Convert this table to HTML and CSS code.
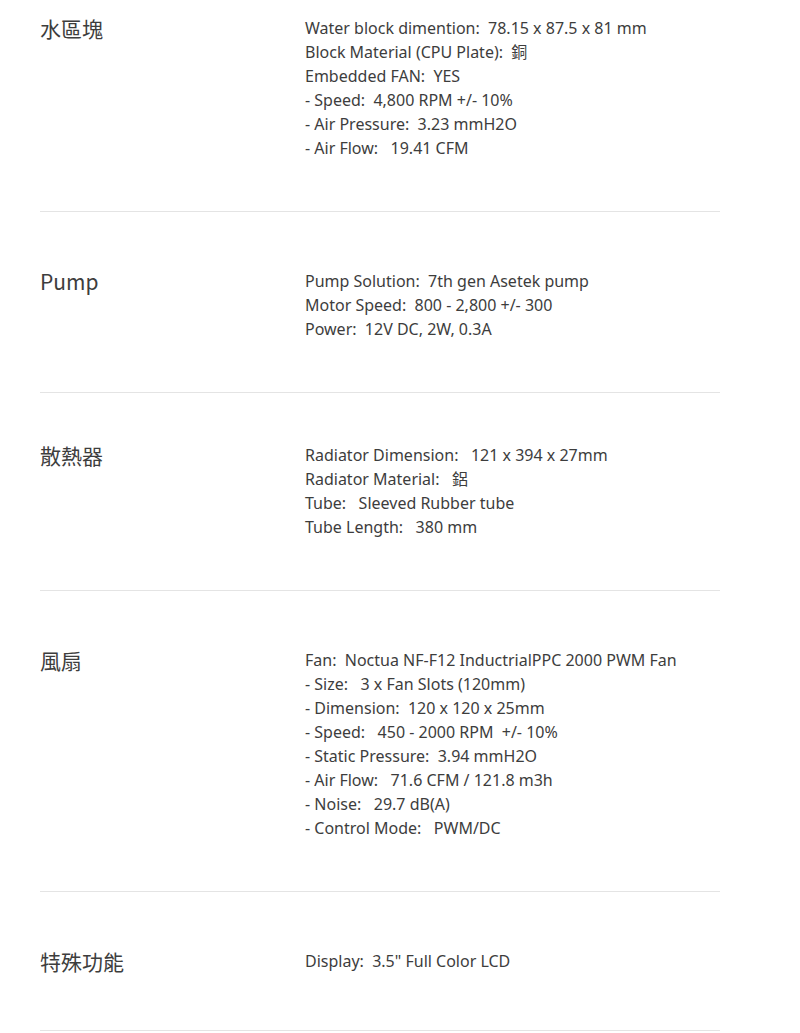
FILE: index.html
```html
<!DOCTYPE html>
<html lang="zh-Hant">
<head>
<meta charset="utf-8">
<title>Specs</title>
<link rel="stylesheet" href="styles.css">
</head>
<body>
<div class="specs">
  <div class="row row-first">
    <div class="label">水區塊</div>
    <div class="values">
      <div>Water block dimention:&nbsp; 78.15 x 87.5 x 81 mm</div>
      <div>Block Material (CPU Plate):&nbsp; 銅</div>
      <div>Embedded FAN:&nbsp; YES</div>
      <div>- Speed:&nbsp; 4,800 RPM +/- 10%</div>
      <div>- Air Pressure:&nbsp; 3.23 mmH2O</div>
      <div>- Air Flow:&nbsp;&nbsp; 19.41 CFM</div>
    </div>
  </div>
  <div class="row">
    <div class="label">Pump</div>
    <div class="values">
      <div>Pump Solution:&nbsp; 7th gen Asetek pump</div>
      <div>Motor Speed:&nbsp; 800 - 2,800 +/- 300</div>
      <div>Power:&nbsp; 12V DC, 2W, 0.3A</div>
    </div>
  </div>
  <div class="row row-tight">
    <div class="label">散熱器</div>
    <div class="values">
      <div>Radiator Dimension:&nbsp;&nbsp; 121 x 394 x 27mm</div>
      <div>Radiator Material:&nbsp;&nbsp; 鋁</div>
      <div>Tube:&nbsp;&nbsp; Sleeved Rubber tube</div>
      <div>Tube Length:&nbsp;&nbsp; 380 mm</div>
    </div>
  </div>
  <div class="row">
    <div class="label">風扇</div>
    <div class="values">
      <div>Fan:&nbsp; Noctua NF-F12 InductrialPPC 2000 PWM Fan</div>
      <div>- Size:&nbsp;&nbsp; 3 x Fan Slots (120mm)</div>
      <div>- Dimension:&nbsp; 120 x 120 x 25mm</div>
      <div>- Speed:&nbsp;&nbsp; 450 - 2000 RPM&nbsp; +/- 10%</div>
      <div>- Static Pressure:&nbsp; 3.94 mmH2O</div>
      <div>- Air Flow:&nbsp;&nbsp; 71.6 CFM / 121.8 m3h</div>
      <div>- Noise:&nbsp;&nbsp; 29.7 dB(A)</div>
      <div>- Control Mode:&nbsp;&nbsp; PWM/DC</div>
    </div>
  </div>
  <div class="row row-last">
    <div class="label">特殊功能</div>
    <div class="values">
      <div>Display:&nbsp; 3.5" Full Color LCD</div>
    </div>
  </div>
</div>
</body>
</html>
```

FILE: styles.css
```css
html, body {
  margin: 0;
  padding: 0;
  background: #ffffff;
}

body {
  font-family: "Noto Sans", "Noto Sans CJK TC", sans-serif;
  color: #3d3d3d;
}

.specs {
  width: 680px;
  margin-left: 40px;
  padding-top: 16px;
}

.row {
  display: grid;
  grid-template-columns: 265px 1fr;
  align-items: start;
  padding: 57px 0 51px;
  border-bottom: 1px solid #e4e4e4;
}

.row-first {
  padding-top: 0;
}

.row-tight {
  padding-top: 50px;
}

.row-last {
  padding-bottom: 57px;
}

.label {
  font-family: "Noto Sans CJK TC", "Noto Sans", sans-serif;
  font-size: 21px;
  line-height: 24px;
  color: #3d3d3d;
}

.values {
  font-size: 16px;
  line-height: 24px;
}
```
